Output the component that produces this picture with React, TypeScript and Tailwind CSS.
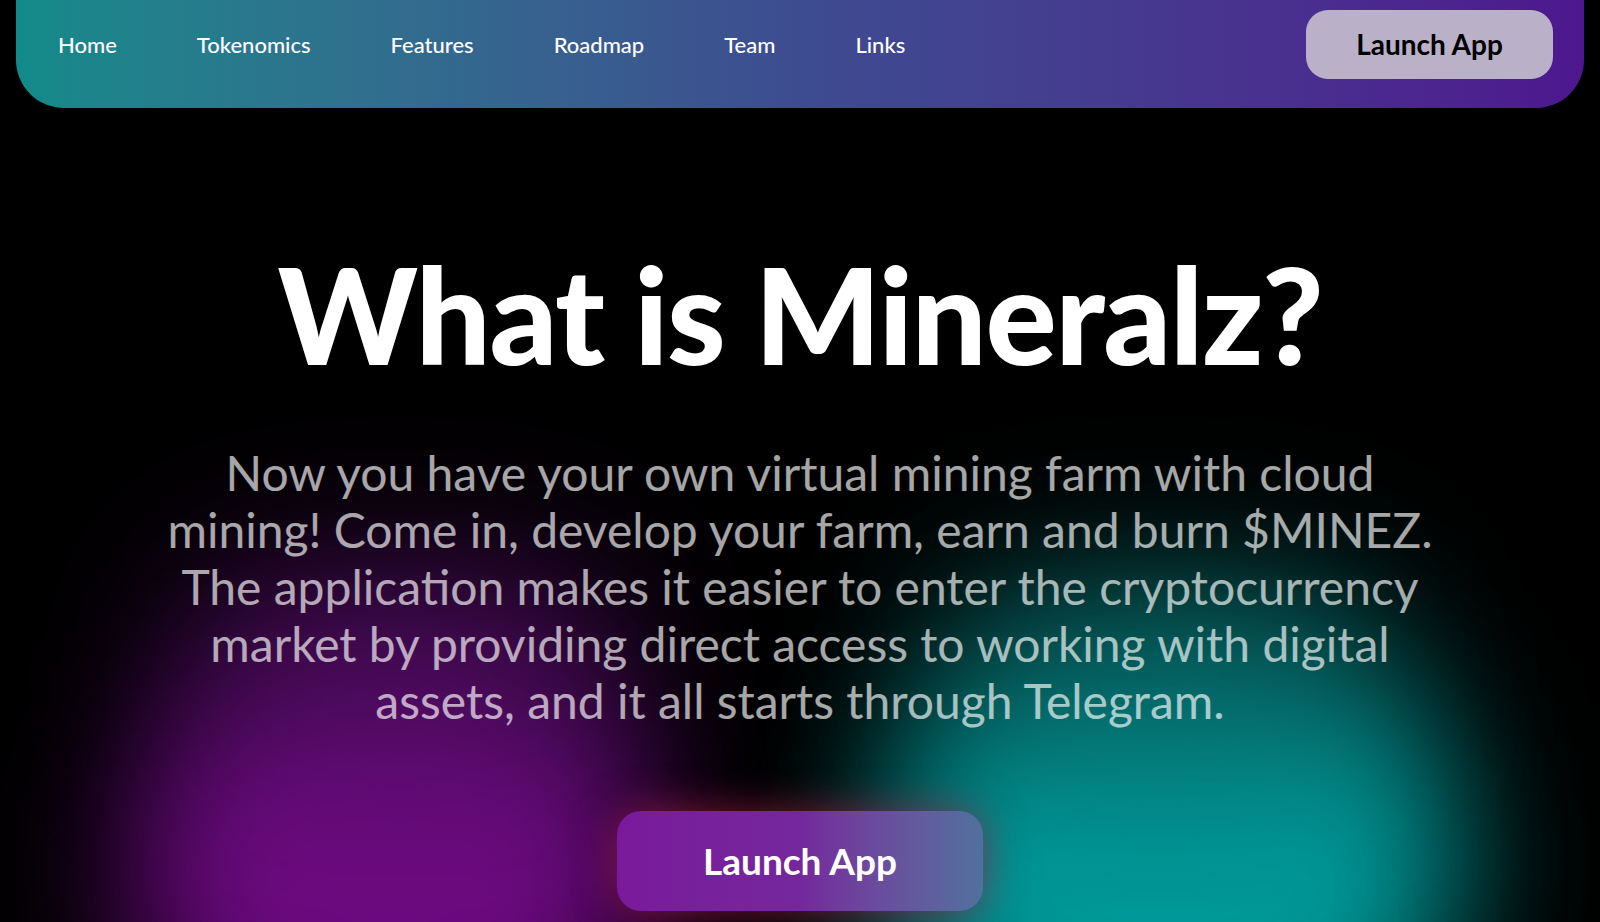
import React from 'react';

const navLinks = ['Home', 'Tokenomics', 'Features', 'Roadmap', 'Team', 'Links'];

const aboutLines = [
    'Now you have your own virtual mining farm with cloud',
    'mining! Come in, develop your farm, earn and burn $MINEZ.',
    'The application makes it easier to enter the cryptocurrency',
    'market by providing direct access to working with digital',
    'assets, and it all starts through Telegram.',
];

export default function App() {
    return (
        <div
            className="relative h-[922px] w-full overflow-hidden bg-black"
            style={{ fontFamily: 'Lato, "Open Sans", sans-serif' }}
        >
            {/* background glows */}
            <div className="pointer-events-none absolute left-[130px] top-[650px] h-[440px] w-[520px] rounded-full bg-[#6c0a80] blur-[70px]" />
            <div className="pointer-events-none absolute left-[880px] top-[630px] h-[460px] w-[580px] rounded-full bg-[#009a9a] blur-[70px]" />
            <div className="pointer-events-none absolute left-[170px] top-[560px] h-[220px] w-[460px] rounded-full bg-[#4a0c5c] opacity-70 blur-[80px]" />
            <div className="pointer-events-none absolute left-[920px] top-[570px] h-[220px] w-[480px] rounded-full bg-[#0a5252] opacity-60 blur-[80px]" />

            <div className="relative flex flex-col items-center">
                <nav className="flex h-[108px] w-[calc(100%-32px)] items-center justify-between rounded-b-[48px] bg-gradient-to-r from-[#128a8a] via-[#3d4c90] to-[#4d178e] pb-[20px] pl-[42px] pr-[31px]">
                    <ul className="flex items-center gap-[80px]">
                        {navLinks.map((link) => (
                            <li key={link} className="text-[22px] font-medium text-white">
                                {link}
                            </li>
                        ))}
                    </ul>
                    <button className="h-[69px] w-[247px] rounded-[22px] bg-[#bab1c9] text-[28px] font-bold text-black">
                        Launch App
                    </button>
                </nav>

                <h1 className="mt-[139px] text-[133px] font-black leading-none tracking-[-1.5px] text-white">
                    What is Mineralz?
                </h1>

                <p className="mt-[64px] text-center text-[48px] leading-[57px] text-white/65">
                    {aboutLines.map((line) => (
                        <span key={line} className="block whitespace-nowrap">
                            {line}
                        </span>
                    ))}
                </p>

                <button className="mt-[82px] h-[100px] w-[366px] rounded-[24px] bg-gradient-to-r from-[#7a1a9c] via-[#74279c] to-[#50709e] text-[37px] font-bold text-white shadow-[0_0_40px_rgba(160,30,70,0.7)]">
                    Launch App
                </button>
            </div>
        </div>
    );
}
